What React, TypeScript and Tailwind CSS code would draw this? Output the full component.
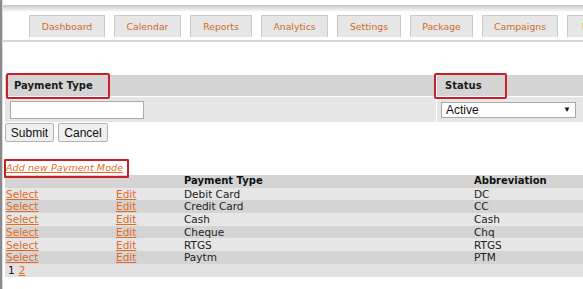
import React from "react";

type Row = { name: string; abbr: string };

const tabs = [
  { label: "Dashboard", w: "w-[76px]" },
  { label: "Calendar", w: "w-[67px]" },
  { label: "Reports", w: "w-[62px]" },
  { label: "Analytics", w: "w-[67px]" },
  { label: "Settings", w: "w-[64px]" },
  { label: "Package", w: "w-[63px]" },
  { label: "Campaigns", w: "w-[76px]" },
  { label: "Users", w: "w-[56px]" },
];

const rows: Row[] = [
  { name: "Debit Card", abbr: "DC" },
  { name: "Credit Card", abbr: "CC" },
  { name: "Cash", abbr: "Cash" },
  { name: "Cheque", abbr: "Chq" },
  { name: "RTGS", abbr: "RTGS" },
  { name: "Paytm", abbr: "PTM" },
];

const verdana = "font-['DejaVu_Sans',Verdana,sans-serif]";
const arial = "font-['Liberation_Sans',Arial,sans-serif]";

export default function App() {
  return (
    <div className="flex w-[583px] h-[289px] overflow-hidden bg-white">
      {/* left frame edge */}
      <div className="w-[2px] shrink-0 bg-[#8a8a8a]" />
      <div className="w-[1px] shrink-0 bg-[#dcdcdc]" />

      <div className="flex-1 min-w-0 flex flex-col">
        {/* top shadow */}
        <div className="mt-[5px] h-[7px] bg-linear-to-b from-[#c6c6c6] to-white" />

        {/* Tabs */}
        <div className={`mt-[3px] ml-[26px] flex gap-[9px] overflow-hidden whitespace-nowrap ${verdana}`}>
          {tabs.map((t) => (
            <div
              key={t.label}
              className={`${t.w} h-[22px] shrink-0 flex items-center justify-center bg-[#e6e6e6] border border-b-0 border-[#c9c9c9] text-[9.3px] text-[#d06a2a]`}
            >
              {t.label}
            </div>
          ))}
        </div>
        <div className="mt-[3px] h-[2px] bg-[#d4d4d4]" />

        {/* Form */}
        <div className="mt-[33px] pl-[2px]">
          <div className="grid grid-cols-[431px_1fr] gap-[1px]">
            <div className="relative h-[21px] bg-[#d4d4d4] flex items-center pl-[9px]">
              <span className={`text-[10px] font-bold text-[#1b1b1b] ${verdana}`}>Payment Type</span>
              <div className="absolute left-[1px] top-[-2px] w-[104px] h-[26px] border-2 border-[#c8202a] rounded-[2px]" />
            </div>
            <div className="relative h-[21px] bg-[#d4d4d4] flex items-center pl-[8px]">
              <span className={`text-[10px] font-bold text-[#1b1b1b] ${verdana}`}>Status</span>
              <div className="absolute left-[-3px] top-[-2px] w-[73px] h-[26px] border-2 border-[#c8202a] rounded-[2px]" />
            </div>
            <div className="h-[25px] bg-[#e6e6e6] pl-[5px] pt-[4px]">
              <input className="block w-[134px] h-[18px] bg-white border border-[#a9a9a9] outline-none" />
            </div>
            <div className="h-[25px] bg-[#e6e6e6] pl-[4px] pt-[5px]">
              <div className={`w-[135px] h-[16px] bg-white border border-[#a9a9a9] flex items-center justify-between pl-[4px] pr-[4px] text-[12px] text-[#111] ${arial}`}>
                <span>Active</span>
                <span className="text-[8px]">▼</span>
              </div>
            </div>
          </div>

          <div className={`mt-[1px] flex gap-[4px] ${arial}`}>
            <button className="w-[49px] h-[19px] bg-[#efefef] border border-[#b3b3b3] rounded-[2px] text-[12px] text-[#111]">
              Submit
            </button>
            <button className="w-[50px] h-[19px] bg-[#efefef] border border-[#b3b3b3] rounded-[2px] text-[12px] text-[#111]">
              Cancel
            </button>
          </div>

          {/* Add link */}
          <div className="relative mt-[20px] h-[13px] flex items-center pl-[1px]">
            <a className={`italic underline text-[9.5px] tracking-[0.1px] text-[#e2691f] ${verdana}`}>Add new Payment Mode</a>
            <div className="absolute left-[-1px] top-[-3px] w-[125px] h-[19px] border-2 border-[#c8202a] rounded-[1px]" />
          </div>

          {/* List */}
          <div className={`text-[10.5px] text-[#222] ${verdana}`}>
            <div className="h-[12.7px] bg-[#d4d4d4] grid grid-cols-[110px_68px_290px_1fr] items-center pl-[1px] leading-none">
              <span />
              <span />
              <span className="font-bold text-[10px] text-[#111]">Payment Type</span>
              <span className="font-bold text-[10px] text-[#111]">Abbreviation</span>
            </div>
            {rows.map((r, i) => (
              <div
                key={r.name}
                className={`h-[12.7px] grid grid-cols-[110px_68px_290px_1fr] items-center pl-[1px] leading-none ${
                  i % 2 === 0 ? "bg-[#e6e6e6]" : "bg-[#d4d4d4]"
                }`}
              >
                <a className="underline text-[#e2691f]">Select</a>
                <a className="underline text-[#e2691f]">Edit</a>
                <span>{r.name}</span>
                <span>{r.abbr}</span>
              </div>
            ))}
            <div className="h-[12.7px] bg-[#e2e2e2] flex items-center gap-[4px] pl-[3px] leading-none">
              <span className="text-[#111]">1</span>
              <a className="underline text-[#e2691f]">2</a>
            </div>
          </div>
        </div>
      </div>
    </div>
  );
}
